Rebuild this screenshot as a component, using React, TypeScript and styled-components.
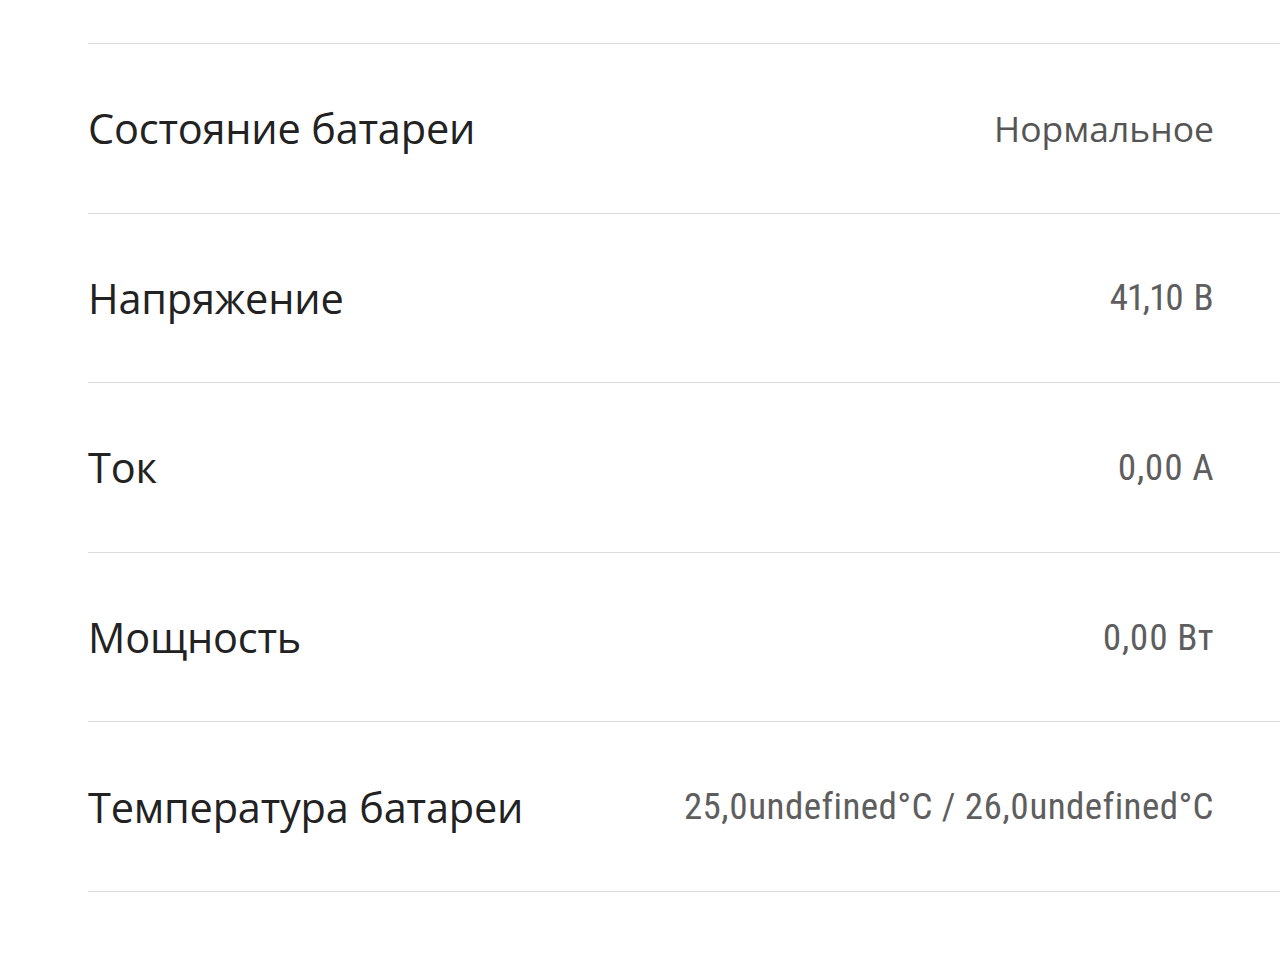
import styled, {createGlobalStyle, css} from "styled-components";


type TypeRow = {
    label: string,
    value: string,
    numeric?: boolean
}


const GlobalStyle = createGlobalStyle`
    html, body {
        margin: 0;
        padding: 0;
        background: #fff;
    }

    body {
        font-family: "Open Sans", "Noto Sans", sans-serif;
        overflow: hidden;
    }
`

const SPage = styled.div`
    width: 1280px;
    height: 960px;
    overflow: hidden;
    padding-top: 43px;
    padding-left: 88px;
    box-sizing: border-box;
`

const SList = styled.div`
    display: flex;
    flex-direction: column;
`

const SRow = styled.div`
    height: 169.6px;
    box-sizing: border-box;
    border-top: 1px solid #dcdcdc;
    padding-right: 66px;

    display: flex;
    justify-content: space-between;
    align-items: center;
`

const SLabel = styled.div`
    font-family: "Open Sans", "Noto Sans", sans-serif;
    font-size: 41.5px;
    color: #222;
    letter-spacing: -0.2px;
`

const SValue = styled.div<{ $numeric?: boolean }>`
    color: #555;

    ${({$numeric}) => $numeric ? css`
        font-family: "Roboto Condensed", "Roboto", sans-serif;
        font-stretch: condensed;
        font-variant-numeric: proportional-nums;
        font-size: 37px;
        letter-spacing: 0.4px;
        color: #5e5e5e;
    ` : css`
        font-family: "Open Sans", "Noto Sans", sans-serif;
        font-size: 35.5px;
    `}
`

const rows: TypeRow[] = [
    {label: 'Состояние батареи', value: 'Нормальное'},
    {label: 'Напряжение', value: '41,10 В', numeric: true},
    {label: 'Ток', value: '0,00 А', numeric: true},
    {label: 'Мощность', value: '0,00 Вт', numeric: true},
    {label: 'Температура батареи', value: '25,0undefined°C / 26,0undefined°C', numeric: true},
]

export default function App() {
    return (<>
        <GlobalStyle/>
        <SPage>
            <SList>
                {rows.map(row => (
                    <SRow key={row.label}>
                        <SLabel>{row.label}</SLabel>
                        <SValue $numeric={row.numeric}>{row.value}</SValue>
                    </SRow>
                ))}
                <SRow/>
            </SList>
        </SPage>
    </>)
}
